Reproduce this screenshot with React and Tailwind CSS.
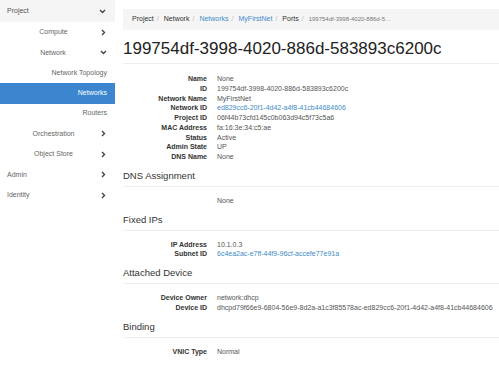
import React from "react";

const font = { fontFamily: '"Liberation Sans", Arial, sans-serif' };

function ChevronDown() {
  return (
    <svg width="7" height="5" viewBox="0 0 7 5" className="text-[#444]">
      <path d="M1 1l2.5 2.5L6 1" fill="none" stroke="currentColor" strokeWidth="1.4" />
    </svg>
  );
}

function ChevronRight() {
  return (
    <svg width="5" height="7" viewBox="0 0 5 7" className="text-[#444]">
      <path d="M1 1l2.5 2.5L1 6" fill="none" stroke="currentColor" strokeWidth="1.4" />
    </svg>
  );
}

const overview = [
  ["Name", "None"],
  ["ID", "199754df-3998-4020-886d-583893c6200c"],
  ["Network Name", "MyFirstNet"],
  ["Network ID", "ed829cc6-20f1-4d42-a4f8-41cb44684606", true],
  ["Project ID", "06f44b73cfd145c0b063d94c5f73c5a6"],
  ["MAC Address", "fa:16:3e:34:c5:ae"],
  ["Status", "Active"],
  ["Admin State", "UP"],
  ["DNS Name", "None"],
];

function Rows({ rows }) {
  return (
    <dl className="grid grid-cols-[84px_1fr] gap-x-[10px] text-[7px] leading-[9.75px]">
      {rows.map(([label, value, link]) => (
        <React.Fragment key={label}>
          <dt className="text-right font-bold text-[#333]">{label}</dt>
          <dd className={link ? "text-[#428bca]" : "text-[#555]"}>{value}</dd>
        </React.Fragment>
      ))}
    </dl>
  );
}

function Section({ title, children }) {
  return (
    <div>
      <h4 className="border-b border-[#eee] pb-[4px] text-[9.5px] leading-[12px] text-[#333]">{title}</h4>
      <div className="pt-[9px] pb-[8px]">{children}</div>
    </div>
  );
}

export default function App() {
  return (
    <div className="flex h-[373px] w-[499px] overflow-hidden bg-white" style={font}>
      <nav className="w-[115px] shrink-0 text-[7px] text-[#666]">
        <div className="flex h-[22px] items-center justify-between bg-[#f5f5f5] pl-[7px] pr-[9px] text-[#555]">
          <span>Project</span>
          <ChevronDown />
        </div>
        <div className="flex h-[20.5px] items-center pr-[9px]">
          <span className="flex-1 pl-[6px] text-center">Compute</span>
          <ChevronRight />
        </div>
        <div className="flex h-[20.5px] items-center pr-[8px]">
          <span className="flex-1 pl-[6px] text-center">Network</span>
          <ChevronDown />
        </div>
        <div className="flex h-[20px] items-center justify-end pr-[8px]">Network Topology</div>
        <div className="flex h-[20.5px] items-center justify-end bg-[#3b86cf] pr-[8px] text-white">Networks</div>
        <div className="flex h-[20px] items-center justify-end pr-[8px]">Routers</div>
        <div className="flex h-[20.5px] items-center pr-[9px]">
          <span className="flex-1 pl-[6px] text-center">Orchestration</span>
          <ChevronRight />
        </div>
        <div className="flex h-[20.5px] items-center pr-[9px]">
          <span className="flex-1 pl-[6px] text-center">Object Store</span>
          <ChevronRight />
        </div>
        <div className="flex h-[20.5px] items-center justify-between pl-[7px] pr-[9px]">
          <span>Admin</span>
          <ChevronRight />
        </div>
        <div className="flex h-[20.5px] items-center justify-between pl-[7px] pr-[9px]">
          <span>Identity</span>
          <ChevronRight />
        </div>
      </nav>
      <main className="min-w-0 flex-1 pl-[8px] pt-[9px]">
        <div className="flex h-[21px] items-center gap-[3px] whitespace-nowrap bg-[#f5f5f5] pl-[9px] text-[7px] text-[#333]">
          <span>Project</span>
          <span className="text-[#bbb]">/</span>
          <span className="ml-[2px]">Network</span>
          <span className="text-[#bbb]">/</span>
          <span className="ml-[2px] text-[#428bca]">Networks</span>
          <span className="text-[#bbb]">/</span>
          <span className="ml-[2px] text-[#428bca]">MyFirstNet</span>
          <span className="text-[#bbb]">/</span>
          <span className="ml-[2px]">Ports</span>
          <span className="text-[#bbb]">/</span>
          <span className="ml-[2px] text-[6px] text-[#777]">199754df-3998-4020-886d-5…</span>
        </div>
        <h1 className="mt-[8px] border-b border-[#eee] pb-[3px] text-[17px] leading-[22px] text-[#222]">
          199754df-3998-4020-886d-583893c6200c
        </h1>
        <div className="pt-[10px] pb-[8px]">
          <Rows rows={overview} />
        </div>
        <Section title="DNS Assignment">
          <div className="pl-[94px] text-[7px] leading-[9.75px] text-[#555]">None</div>
        </Section>
        <Section title="Fixed IPs">
          <Rows
            rows={[
              ["IP Address", "10.1.0.3"],
              ["Subnet ID", "6c4ea2ac-e7ff-44f9-96cf-accefe77e91a", true],
            ]}
          />
        </Section>
        <Section title="Attached Device">
          <Rows
            rows={[
              ["Device Owner", "network:dhcp"],
              ["Device ID", "dhcpd79f66e9-6804-56e9-8d2a-a1c3f85578ac-ed829cc6-20f1-4d42-a4f8-41cb44684606"],
            ]}
          />
        </Section>
        <Section title="Binding">
          <Rows rows={[["VNIC Type", "Normal"]]} />
        </Section>
      </main>
    </div>
  );
}
